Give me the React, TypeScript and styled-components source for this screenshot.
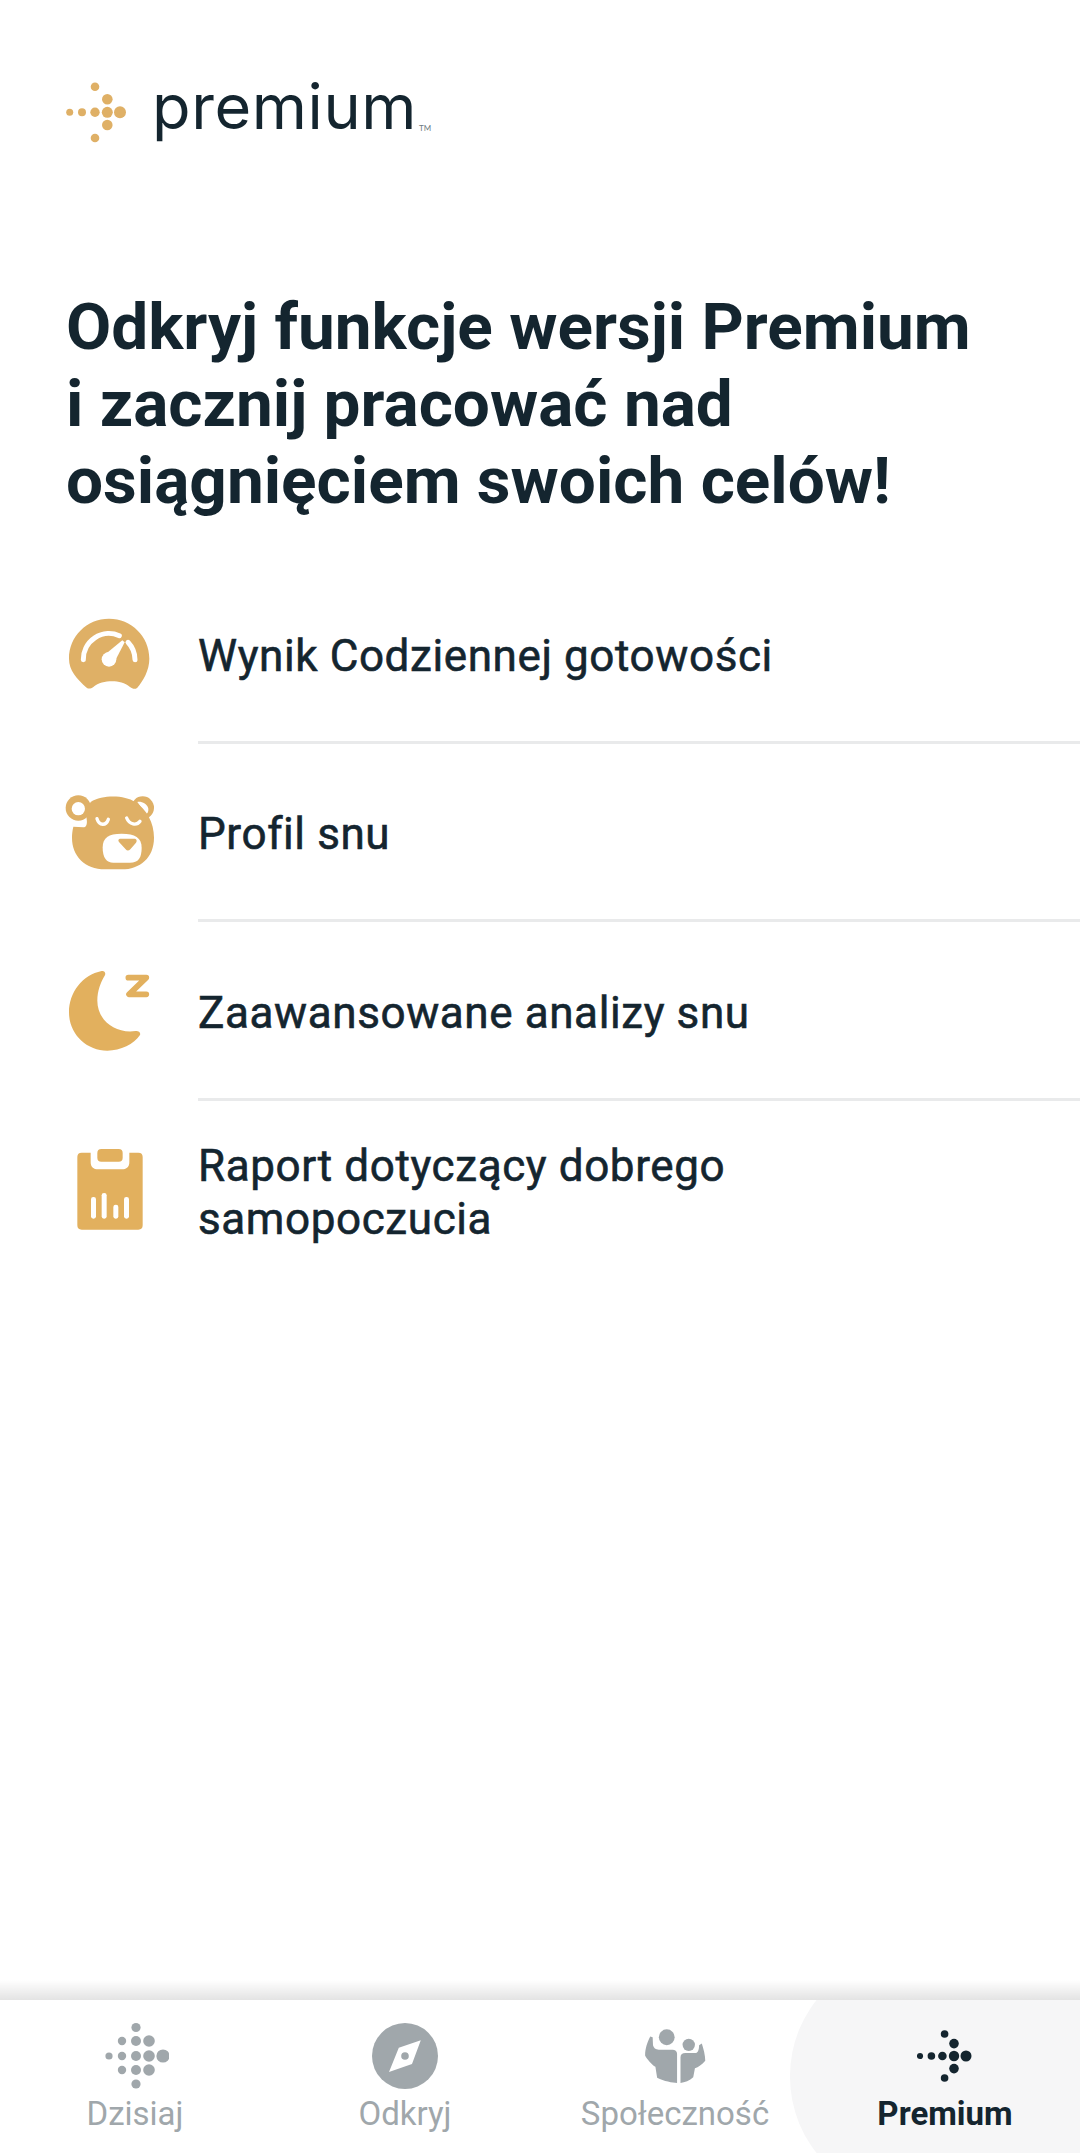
import React from 'react';
import styled, { createGlobalStyle } from 'styled-components';

const GOLD = '#dfb066';
const INK = '#14252f';
const GREY = '#a0a7ab';

const GlobalStyle = createGlobalStyle`
  html, body {
    margin: 0;
    padding: 0;
    background: #fff;
  }
`;

const Page = styled.div`
  display: flex;
  flex-direction: column;
  width: 1080px;
  height: 2153px;
  overflow: hidden;
  background: #fff;
  font-family: Roboto, 'Noto Sans', sans-serif;
  color: ${INK};
`;

const Logo = styled.header`
  display: flex;
  align-items: center;
  height: 110px;
  margin: 57px 0 0 66px;
`;

const LogoWord = styled.span`
  font-family: Inter, sans-serif;
  font-size: 63px;
  font-weight: 400;
  letter-spacing: 0.6px;
  line-height: 1;
  margin-left: 26px;
  position: relative;
  top: -6px;
`;

const LogoTm = styled.span`
  font-family: Lato, sans-serif;
  font-size: 8px;
  align-self: flex-end;
  margin: 0 0 34px 2px;
  color: #6d7a81;
`;

const Title = styled.h1`
  margin: 121px 0 46px 66px;
  font-size: 65.7px;
  font-weight: 700;
  line-height: 77px;
`;

const List = styled.ul`
  list-style: none;
  margin: 0;
  padding: 0;
`;

const Row = styled.li`
  display: flex;
  align-items: center;
  padding-left: 66px;
`;

const IconSlot = styled.div`
  flex: 0 0 132px;
  display: flex;
  align-items: center;
`;

const RowText = styled.div<{ $last?: boolean }>`
  flex: 1;
  display: flex;
  align-items: center;
  height: 178.5px;
  box-sizing: border-box;
  padding: 7px 200px 0 0;
  font-size: 44px;
  line-height: 53px;
  font-weight: 400;
  letter-spacing: 0.6px;
  -webkit-text-stroke: 0.6px ${INK};
  border-bottom: ${(p) => (p.$last ? 'none' : '3px solid #e9eaeb')};
`;

const Spacer = styled.div`
  flex: 1;
`;

const NavShadow = styled.div`
  height: 20px;
  background: linear-gradient(to bottom, rgba(0, 0, 0, 0), rgba(0, 0, 0, 0.11));
`;

const Nav = styled.nav`
  display: grid;
  grid-template-columns: repeat(4, 1fr);
  height: 153px;
  overflow: hidden;
  background: #fff;
`;

const Tab = styled.div<{ $active?: boolean }>`
  position: relative;
  display: flex;
  flex-direction: column;
  align-items: center;
  color: ${(p) => (p.$active ? INK : GREY)};
  font-size: 33px;
  font-weight: ${(p) => (p.$active ? 700 : 400)};

  ${(p) =>
    p.$active &&
    `
    &::before {
      content: '';
      position: absolute;
      left: -20px;
      right: 0;
      top: -46px;
      bottom: -46px;
      border-radius: 122px 0 0 122px;
      background: #f6f6f7;
    }
  `}
`;

const TabIcon = styled.div`
  position: relative;
  height: 72px;
  margin-top: 20px;
  display: flex;
  align-items: center;
  justify-content: center;
`;

const TabLabel = styled.span`
  position: relative;
  line-height: 44px;
`;

type Dot = [number, number, number];

const premiumDots: Dot[] = [
  [29, 6.7, 4.3],
  [41.3, 19.3, 5.3],
  [3.7, 32.3, 3.5],
  [16, 32.3, 4],
  [29, 32.3, 4.7],
  [41.3, 32.3, 5.5],
  [54, 32.3, 6],
  [41.3, 45, 5.3],
  [29, 58, 4.3],
];

const LogoMark = () => (
  <svg width="60" height="65" viewBox="0 0 60 65" fill={GOLD}>
    {premiumDots.map(([x, y, r]) => (
      <circle key={`${x}-${y}`} cx={x} cy={y} r={r} />
    ))}
  </svg>
);

const GaugeIcon = () => (
  <svg width="84" height="74" viewBox="51 50 252 222" style={{ marginLeft: 1 }}>
    <path
      fill={GOLD}
      d="M110 262C80 235 57 210 57 175C57 108 110 55 177 55C244 55 298 108 298 175C298 210 280 240 262 262C255 268 248 266 240 260C225 248 205 243 187 243C165 243 145 248 130 260C122 266 115 266 110 262Z"
    />
    <g fill="none" stroke="#fff" strokeLinecap="round">
      <path strokeWidth="15" d="M100 178A77 77 0 0 1 208 106" />
      <path strokeWidth="15" d="M234 126A77 77 0 0 1 255 178" />
    </g>
    <path fill="#fff" d="M166 162L217 120L224 126L192 188Z" />
    <circle cx="177" cy="177" r="22" fill="#fff" />
  </svg>
);

const BearIcon = () => (
  <svg width="90" height="76" viewBox="45 587 270 228" style={{ marginLeft: -1 }}>
    <circle cx="85" cy="626" r="38" fill={GOLD} />
    <circle cx="85" cy="628" r="20" fill="#fff" />
    <circle cx="278" cy="625" r="34" fill={GOLD} />
    <path fill="#fff" d="M262 608C272 605 292 612 295 628C296 636 293 642 288 644Z" />
    <path
      fill={GOLD}
      d="M122 608C160 585 225 588 255 608C290 630 312 670 312 715C312 775 270 810 215 810L165 810C105 810 66 770 66 715C66 705 67 695 70 682L100 684C110 684 112 672 110 660C108 640 115 620 122 608Z"
    />
    <g fill="none" stroke="#fff" strokeWidth="10" strokeLinecap="round">
      <path d="M141 658C148 680 168 680 175 660" />
      <path d="M230 656C238 676 260 680 270 666" />
    </g>
    <path
      fill="#fff"
      d="M158 745C158 715 175 703 215 703C255 703 275 715 275 745C275 775 265 790 240 790L190 790C170 790 158 775 158 745Z"
    />
    <path fill={GOLD} d="M212 718L252 718C260 718 262 724 258 730L241 750C236 755 231 755 227 750L207 728C203 722 206 718 212 718Z" />
  </svg>
);

const MoonIcon = () => (
  <svg width="84" height="84" viewBox="54 60 252 252" style={{ marginLeft: 1 }}>
    <path
      fill="#e2b05e"
      d="M158 66C100 78 60 130 60 190C60 255 112 305 175 305C215 305 255 285 273 258C276 250 268 245 260 246C200 255 145 215 145 155C145 125 155 100 167 80C172 72 166 64 158 66Z"
    />
    <path
      fill="none"
      stroke="#e2b05e"
      strokeWidth="17"
      strokeLinecap="round"
      strokeLinejoin="round"
      d="M238 86L292 86L240 136L292 136"
    />
  </svg>
);

const ClipboardIcon = () => (
  <svg width="66" height="81" viewBox="82 601 196 243" style={{ marginLeft: 11 }}>
    <path
      fill="#e2b05e"
      d="M95 612L122 612L122 640C122 655 130 662 145 662L215 662C230 662 238 655 238 640L238 612L265 612Q278 612 278 625L278 830Q278 843 265 843L95 843Q82 843 82 830L82 625Q82 612 95 612Z"
    />
    <rect x="142" y="601" width="76" height="38" rx="12" fill="#e2b05e" />
    <rect x="123" y="745" width="15" height="65" rx="7" fill="#fff" />
    <rect x="155" y="733" width="15" height="77" rx="7" fill="#fff" />
    <rect x="190" y="768" width="15" height="42" rx="7" fill="#fff" />
    <rect x="222" y="745" width="15" height="65" rx="7" fill="#fff" />
  </svg>
);

const todayDots: Dot[] = [
  [28, 3.5, 4.6],
  [14, 17, 4.2],
  [28, 17, 5],
  [41, 17, 5.8],
  [1, 32, 3.6],
  [14, 32, 4.2],
  [28, 32, 5],
  [41, 32, 5.8],
  [55, 32, 6.6],
  [14, 46, 4.2],
  [28, 46, 5],
  [41, 46, 5.8],
  [28, 60, 4.6],
];

const TodayIcon = () => (
  <svg width="68" height="68" viewBox="-5 -2 64 68" fill={GREY}>
    {todayDots.map(([x, y, r]) => (
      <circle key={`${x}-${y}`} cx={x} cy={y} r={r} />
    ))}
  </svg>
);

const CompassIcon = () => (
  <svg width="66" height="66" viewBox="0 0 66 66">
    <circle cx="33" cy="33" r="33" fill={GREY} />
    <path
      fill="#fff"
      fillRule="evenodd"
      d="M48.8 17.2L26.8 24.8L17 49L40 41ZM33 29.2A3.8 3.8 0 1 1 33 36.8A3.8 3.8 0 1 1 33 29.2Z"
    />
  </svg>
);

const CommunityIcon = () => (
  <svg width="62" height="55" viewBox="302 158 180 160" fill={GREY}>
    <circle cx="368" cy="182" r="23" />
    <circle cx="432" cy="204" r="18" />
    <path d="M320 180C312 195 305 215 305 235C310 245 325 262 335 268L340 300C360 310 385 315 398 315L398 230C398 222 392 218 385 218L345 218C335 218 330 212 328 205L327 182Z" />
    <path d="M408 315L408 240C408 232 414 228 422 228L450 228C458 228 462 220 462 205L470 200C475 215 480 235 480 250C470 262 460 268 450 272L445 298C435 308 420 313 408 315Z" />
  </svg>
);

const bottomPremiumDots: Dot[] = [
  [27.6, 5, 3.8],
  [37, 14.6, 4.8],
  [3, 27, 3.1],
  [14.4, 27, 3.8],
  [25.4, 27, 4.3],
  [37, 27, 5.2],
  [49, 27, 5.5],
  [37, 39.6, 4.8],
  [27.6, 49, 3.8],
];

const PremiumTabIcon = () => (
  <svg width="56" height="54" viewBox="0 0 56 54" fill={INK}>
    {bottomPremiumDots.map(([x, y, r]) => (
      <circle key={`${x}-${y}`} cx={x} cy={y} r={r} />
    ))}
  </svg>
);

const features = [
  { icon: <GaugeIcon />, label: 'Wynik Codziennej gotowości' },
  { icon: <BearIcon />, label: 'Profil snu' },
  { icon: <MoonIcon />, label: 'Zaawansowane analizy snu' },
  { icon: <ClipboardIcon />, label: 'Raport dotyczący dobrego samopoczucia' },
];

const App = () => {
  return (
    <Page>
      <GlobalStyle />

      {/* Logo */}
      <Logo>
        <LogoMark />
        <LogoWord>premium</LogoWord>
        <LogoTm>TM</LogoTm>
      </Logo>

      <Title>
        Odkryj funkcje wersji Premium
        <br />i zacznij pracować nad
        <br />
        osiągnięciem swoich celów!
      </Title>

      {/* Features */}
      <List>
        {features.map((f, i) => (
          <Row key={f.label}>
            <IconSlot>{f.icon}</IconSlot>
            <RowText $last={i === features.length - 1}>{f.label}</RowText>
          </Row>
        ))}
      </List>

      <Spacer />

      {/* Bottom navigation */}
      <NavShadow />
      <Nav>
        <Tab>
          <TabIcon>
            <TodayIcon />
          </TabIcon>
          <TabLabel>Dzisiaj</TabLabel>
        </Tab>
        <Tab>
          <TabIcon>
            <CompassIcon />
          </TabIcon>
          <TabLabel>Odkryj</TabLabel>
        </Tab>
        <Tab>
          <TabIcon>
            <CommunityIcon />
          </TabIcon>
          <TabLabel>Społeczność</TabLabel>
        </Tab>
        <Tab $active>
          <TabIcon>
            <PremiumTabIcon />
          </TabIcon>
          <TabLabel>Premium</TabLabel>
        </Tab>
      </Nav>
    </Page>
  );
};

export default App;
